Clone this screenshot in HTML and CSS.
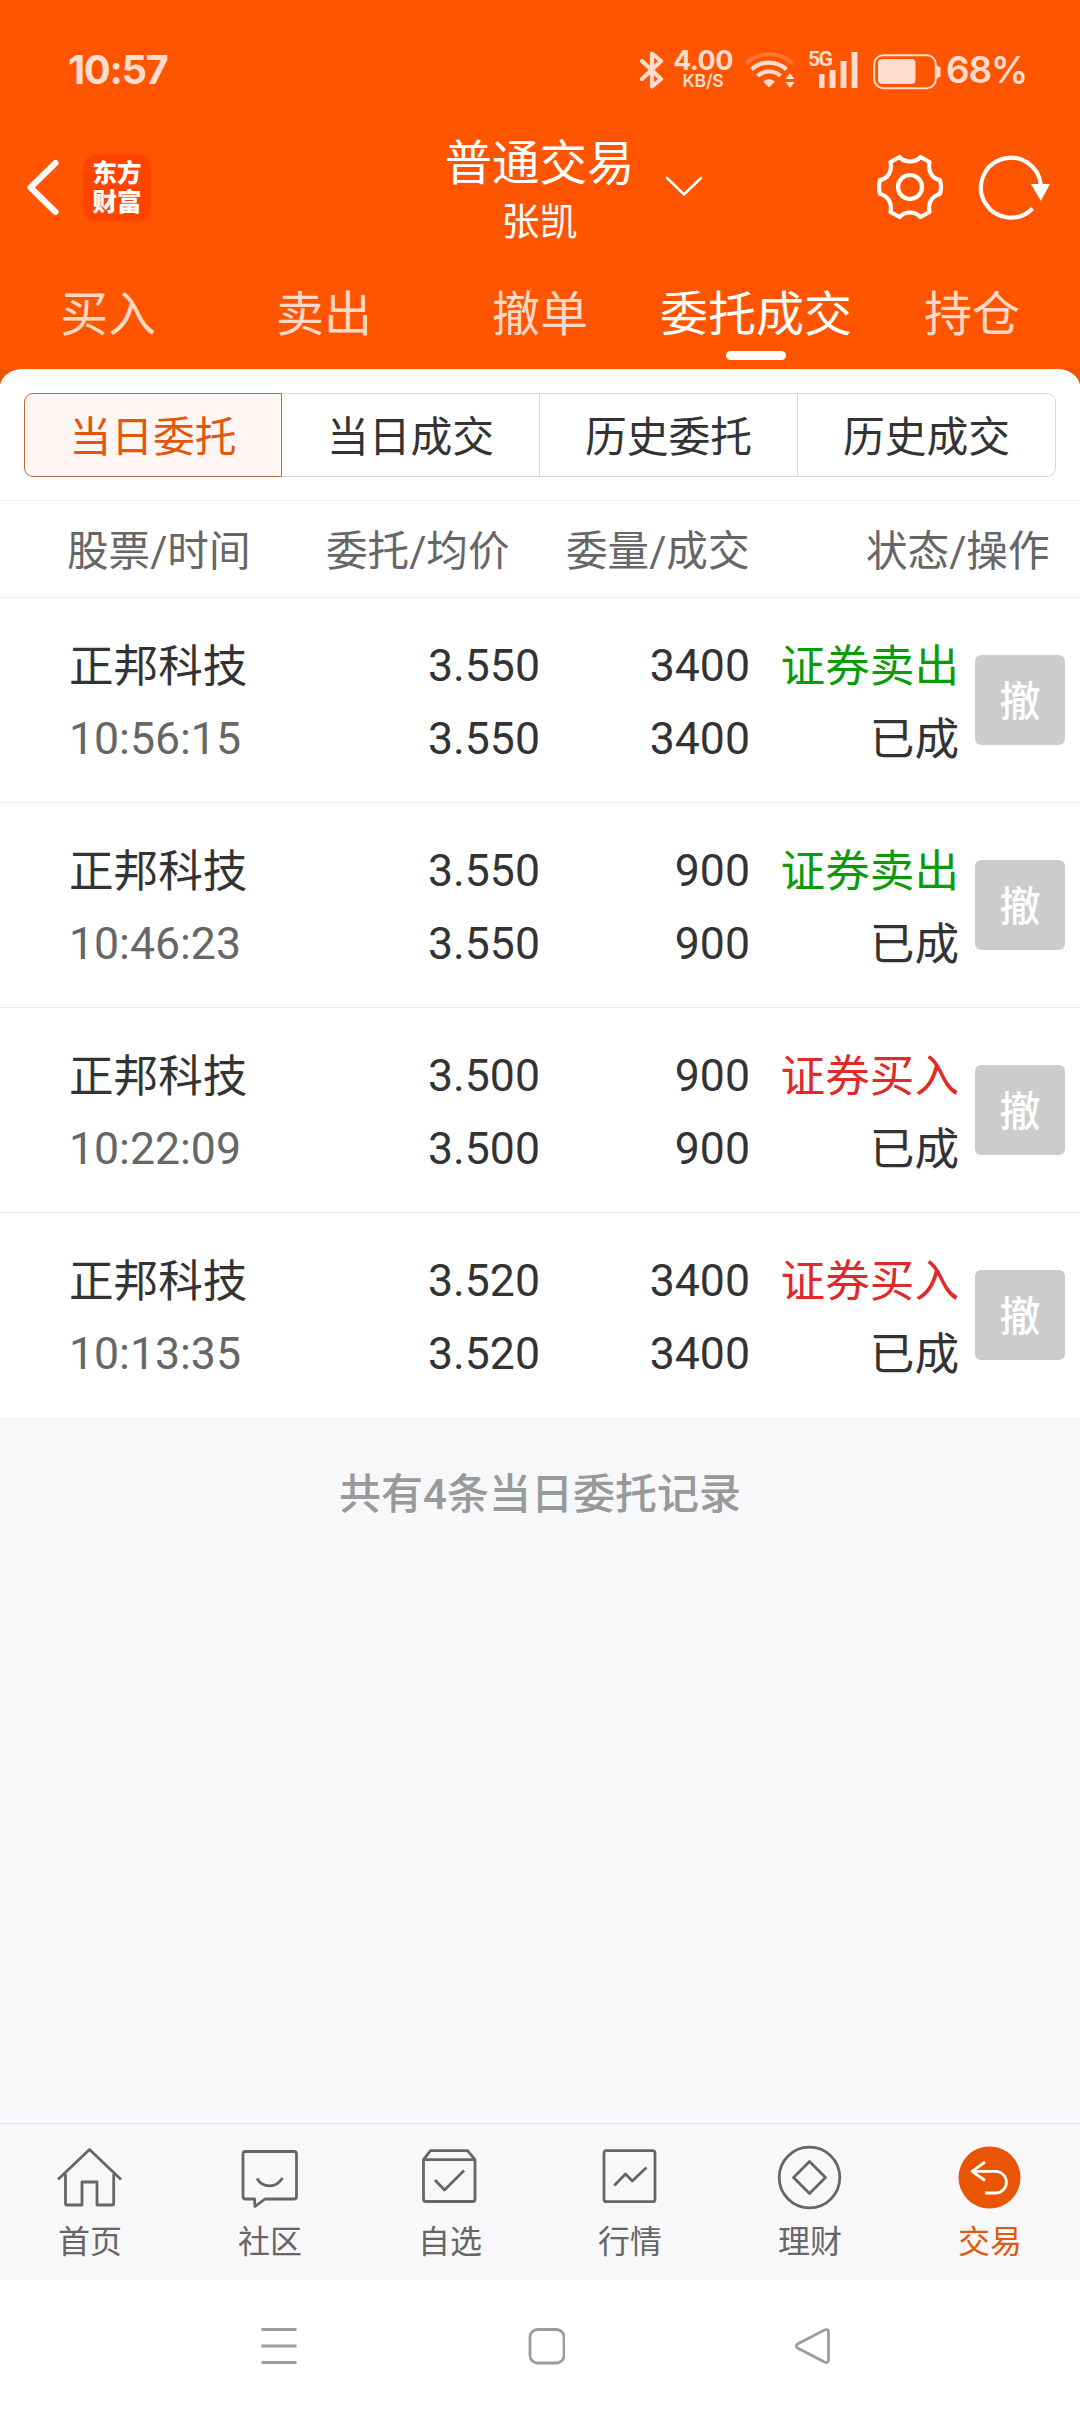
FILE: index.html
```html
<!DOCTYPE html>
<html lang="zh-CN">
<head>
<meta charset="utf-8">
<title>普通交易</title>
<link rel="stylesheet" href="styles.css">
</head>
<body>
<div class="app">
  <header class="header">
    <div class="status">
      <span class="clock">10:57</span>
      <div class="status-right">
        <svg class="bt" width="24" height="38" viewBox="0 0 24 38"><path d="M2 10 21 28 12 35.500V2.500L21 10 2 28" fill="none" stroke="currentColor" stroke-width="4.200" stroke-linejoin="round" stroke-linecap="round"/></svg>
        <div class="speed"><b>4.00</b><i>KB/S</i></div>
        <svg class="wifi" width="52" height="38" viewBox="0 0 52 38">
          <path d="M2 12.500A34 34 0 0 1 48.500 12.500" fill="none" stroke="currentColor" stroke-width="4" opacity=".25"/>
          <path d="M7.500 18.500A25.500 25.500 0 0 1 42.500 18.500M13.500 25A17 17 0 0 1 36.500 25" fill="none" stroke="currentColor" stroke-width="4.200"/>
          <path d="M25 36.500 19 30.500Q25 25.500 31 30.500ZM41.500 28 46 22 50.500 28ZM41.500 31H50.500L46 37Z" fill="currentColor"/>
        </svg>
        <div class="signal">
          <span class="gen">5G</span>
          <svg width="39" height="37" viewBox="0 0 39 37"><path d="M0 23h5.500v14H0zM10.500 19h6v18h-6zM21.500 10h6v27h-6zM32.500 1h6v36h-6z" fill="currentColor"/></svg>
        </div>
        <svg class="battery" width="68" height="36" viewBox="0 0 68 36"><rect x="1.200" y="1.200" width="61.600" height="33" rx="9" fill="none" stroke="currentColor" stroke-width="2"/><rect x="5" y="5" width="37.500" height="25" rx="4" fill="currentColor"/><path d="M63 11.500q4.500 1 4.500 3v7q0 2-4.500 3z" fill="currentColor"/></svg>
        <span class="percent">68%</span>
      </div>
    </div>
    <div class="titlebar">
      <div class="bar-left">
        <svg width="36" height="60" viewBox="0 0 36 60"><path d="M31.500 5 6.500 29.500 31.500 54" fill="none" stroke="#fff" stroke-width="6" stroke-linecap="round" stroke-linejoin="round"/></svg>
        <div class="logo"><span>东方</span><span>财富</span></div>
      </div>
      <div class="account"><h1>普通交易</h1><p>张凯</p></div>
      <div class="bar-right">
        <svg class="chevron" width="38" height="24" viewBox="0 0 38 24"><path d="M2 3 19 19.500 36 3" fill="none" stroke="#fff" stroke-width="2.600" stroke-linecap="round"/></svg>
        <svg class="gear" width="68" height="68" viewBox="0 0 68 68"><g fill="none" stroke="#fff" stroke-width="4.200" stroke-linejoin="round"><path d="M23.500 4C29 10 39 10 44.500 4L53.500 9C51.500 18 56 25.500 64 27Q66 34 64 41C56 43 51.500 50 53.500 59L44.500 64C39 58 29 58 23.500 64L14.500 59C16.500 50 12 43 4 41Q2 34 4 27C12 25.500 16.500 18 14.500 9Z"/><circle cx="34" cy="34" r="12"/></g></svg>
        <svg class="refresh" width="74" height="68" viewBox="0 0 74 68"><path d="M55.500 55.500A30 30 0 1 1 63.800 32" fill="none" stroke="#fff" stroke-width="4.200"/><path d="M54 31H73L63.800 48Z" fill="#fff"/></svg>
      </div>
    </div>
    <nav class="tabs">
      <span>买入</span><span>卖出</span><span>撤单</span><span class="on">委托成交</span><span>持仓</span>
    </nav>
  </header>
  <main class="sheet-wrap">
    <section class="sheet">
      <div class="segment"><span class="on">当日委托</span><span>当日成交</span><span>历史委托</span><span>历史成交</span></div>
      <div class="thead"><span>股票/时间</span><span>委托/均价</span><span>委量/成交</span><span>状态/操作</span></div>
      <div class="row"><div class="name">正邦科技<em>10:56:15</em></div><div>3.550<br>3.550</div><div>3400<br>3400</div><div class="state"><span class="sell">证券卖出</span><br>已成</div><button>撤</button></div>
      <div class="row"><div class="name">正邦科技<em>10:46:23</em></div><div>3.550<br>3.550</div><div>900<br>900</div><div class="state"><span class="sell">证券卖出</span><br>已成</div><button>撤</button></div>
      <div class="row"><div class="name">正邦科技<em>10:22:09</em></div><div>3.500<br>3.500</div><div>900<br>900</div><div class="state"><span class="buy">证券买入</span><br>已成</div><button>撤</button></div>
      <div class="row"><div class="name">正邦科技<em>10:13:35</em></div><div>3.520<br>3.520</div><div>3400<br>3400</div><div class="state"><span class="buy">证券买入</span><br>已成</div><button>撤</button></div>
    </section>
    <p class="summary">共有4条当日委托记录</p>
  </main>
  <nav class="bottom">
    <a><svg viewBox="0 0 72 72"><path d="M4 39.500 35.500 9.500 67 39.500M11.500 34V63.500Q11.500 65 13 65H28V42H43V65H58Q59.700 65 59.700 63.500V34"/></svg>首页</a>
    <a><svg viewBox="0 0 72 72"><path d="M11.500 11.500H60Q62.500 11.500 62.500 14V56.500Q62.500 59 60 59H31L21 66.500 20.500 59H11.500Q9 59 9 56.500V14Q9 11.500 11.500 11.500ZM23 38.500C29 48.500 42 48.500 48.500 38"/></svg>社区</a>
    <a><svg viewBox="0 0 72 72"><path d="M9.500 19.700 16.500 10.700H53.500L61 19.700V59Q61 61.500 58.500 61.500H12Q9.500 61.500 9.500 59ZM9.500 19.700H61M21 40 30.500 50 50 30.500"/></svg>自选</a>
    <a><svg viewBox="0 0 72 72"><rect x="10" y="10.700" width="51" height="51" rx="2.500"/><path d="M20.300 45.500 31.500 34 38.300 41 52.500 27.500"/></svg>行情</a>
    <a><svg viewBox="0 0 72 72"><circle cx="35.500" cy="37.500" r="30.300"/><path d="M35.500 21.500 51.500 37.500 35.500 53.500 19.500 37.500Z"/></svg>理财</a>
    <a class="on"><svg viewBox="0 0 72 72"><circle class="disc" cx="35.500" cy="37.500" r="31"/><path d="M31 22 18 31.300 31 40.500M18 31.300H42.500A10.900 10.900 0 0 1 42.500 53H31"/></svg>交易</a>
  </nav>
  <footer class="system">
    <svg width="38" height="38" viewBox="0 0 38 38"><path d="M1.500 2.500H36.500M1.500 19H36.500M1.500 35.500H36.500"/></svg>
    <svg width="38" height="38" viewBox="0 0 38 38"><rect x="3" y="2.500" width="34" height="33.500" rx="7.500"/></svg>
    <svg width="38" height="38" viewBox="0 0 38 38"><path d="M3.500 17 30.500 3Q34.500 1.500 34.500 5V33Q34.500 36.500 30.500 35L3.500 21Q1 19 3.500 17Z"/></svg>
  </footer>
</div>
</body>
</html>
```

FILE: styles.css
```css
* { box-sizing: border-box; margin: 0; padding: 0; }

body {
  width: 1080px;
  background: #fff;
  color: #333;
  font-family: Roboto, "Noto Sans CJK SC", sans-serif;
}

svg { display: block; flex: none; }

.app { display: flex; flex-direction: column; height: 2412px; }

/* Orange header */
.header { height: 369px; background: #f50; color: #fff; }

.status {
  display: flex;
  justify-content: space-between;
  height: 138px;
  padding: 0 54px 0 67px;
  color: #ffdccb;
}
.clock { margin-top: 46px; padding-left: 1px; font: 700 40px/48px Inter, Roboto, sans-serif; letter-spacing: -1.400px; }
.status-right { display: flex; align-items: flex-start; padding-top: 51px; }
.speed {
  display: flex;
  flex-direction: column;
  align-items: center;
  width: 62px;
  margin: -1px 0 0 8px;
}
.speed b { font: 700 27px/22px Inter, Roboto, sans-serif; letter-spacing: -.6px; }
.speed i { margin-top: 1px; font: 600 17.500px/16px Inter, Roboto, sans-serif; letter-spacing: -.2px; }
.wifi { margin-left: 10px; }
.signal { position: relative; width: 50px; margin-left: 12px; padding-left: 11px; }
.gen { position: absolute; left: 0; top: -1px; font: 700 21px/19px Roboto, sans-serif; letter-spacing: -1.5px; }
.battery { margin: 3px 0 0 15px; }
.percent { width: 80px; margin: -5px 0 0 5px; font: 600 37px/48px Inter, Roboto, sans-serif; letter-spacing: -1.200px; }

.titlebar {
  display: grid;
  grid-template-columns: 400px 278px 402px;
  height: 114px;
}
.bar-left { display: flex; align-items: center; gap: 23px; padding-left: 24px; height: 99px; }
.logo {
  display: flex;
  flex-direction: column;
  align-items: center;
  justify-content: center;
  width: 68px;
  height: 68px;
  border-radius: 14px;
  background: #f40;
  font: 900 24.500px/29px Roboto, "Noto Sans CJK SC", sans-serif;
}
.account { text-align: center; }
.account h1 { font-weight: 400; font-size: 47.500px; line-height: 52px; padding-left: 1px; }
.account p { font-size: 38px; line-height: 64px; padding-left: 1px; }
.bar-right { display: flex; padding-top: 15px; }
.chevron { margin: 22px 0 0 -13px; }
.gear { margin-left: 173px; }
.refresh { margin-left: 33px; }

.tabs { display: grid; grid-template-columns: repeat(5, 1fr); height: 117px; }
.tabs span {
  display: flex;
  flex-direction: column;
  align-items: center;
  color: #ffd9c6;
  font-size: 48px;
  line-height: 66px;
  padding-top: 30px;
}
.tabs .on { color: #fff; }
.tabs .on::after { content: ""; width: 60px; height: 9px; margin-top: 3px; border-radius: 5px; background: #fff; }

/* Order list */
.sheet-wrap {
  flex: 1;
  background: linear-gradient(#ea5504 15px, #f7f8fa 15px);
}
.sheet { height: 1048px; border-radius: 23px 23px 0 0 / 18px 18px 0 0; background: #fff; padding-top: 24px; }
.segment {
  display: grid;
  grid-template: 84px / repeat(4, 1fr);
  width: 1032px;
  margin: 0 auto 23px;
}
.segment span {
  border: 1px solid #d5d6d8;
  border-left-width: 0;
  padding-top: 3px;
  text-align: center;
  font-size: 41.800px;
  line-height: 79px;
  padding-top: 4px;
}
.segment span:last-child { border-radius: 0 9px 9px 0; }
.segment .on { border: 1px solid #c0673a; border-radius: 9px 0 0 9px; background: #fff5f2; color: #e2570c; }
.thead {
  display: grid;
  grid-template-columns: 259px 240px 300px 184px;
  height: 98px;
  padding-left: 67px;
  border-top: 1px solid #f3f3f4;
  border-bottom: 1px solid #ececee;
  color: #666;
  font-size: 41.600px;
  line-height: 101px;
  white-space: nowrap;
}
.row {
  display: grid;
  grid-template-columns: 231px 240px 210px 210px 105px;
  height: 205px;
  padding: 32px 0 0 69px;
  border-bottom: 1px solid #ececee;
  font-size: 44.600px;
  line-height: 73px;
  text-align: right;
}
.row:last-child { border: 0; }
.name { padding-top: 1px; text-align: left; }
.name em { display: block; margin-top: -1px; color: #666; font-style: normal; }
.state { padding: 1px 1px 0 0; }
.sell { color: #0a9b0a; }
.buy { color: #e02a2a; }
.row button {
  width: 90px;
  height: 90px;
  margin: 25px 0 0 15px;
  border: 0;
  border-radius: 6px;
  background: #ccc;
  color: #fff;
  font: 500 41px/94px Roboto, "Noto Sans CJK SC", sans-serif;
}
.summary { padding-top: 46px; color: #999; font-size: 42px; font-weight: 500; line-height: 64px; text-align: center; }

/* Bottom navigation */
.bottom {
  display: grid;
  grid-template-columns: repeat(6, 1fr);
  height: 157px;
  border-top: 1px solid #e1e4e6;
  background: #f8f8fa;
}
.bottom a {
  display: flex;
  flex-direction: column;
  align-items: center;
  padding-top: 16px;
  color: #666;
  font-size: 32px;
  line-height: 60px;
}
.bottom svg {
  width: 72px;
  height: 72px;
  fill: none;
  stroke: #666;
  stroke-width: 2.800;
  stroke-linejoin: round;
}
.bottom .on { color: #e2570c; }
.bottom .on svg { stroke: #fff; }
.bottom .disc { fill: #ea5504; stroke: none; }

.system {
  display: flex;
  justify-content: space-between;
  height: 132px;
  padding: 47px 248px 0 260px;
  background: #fff;
}
.system svg { fill: none; stroke: #9c9c9c; stroke-width: 2.800; }
```
